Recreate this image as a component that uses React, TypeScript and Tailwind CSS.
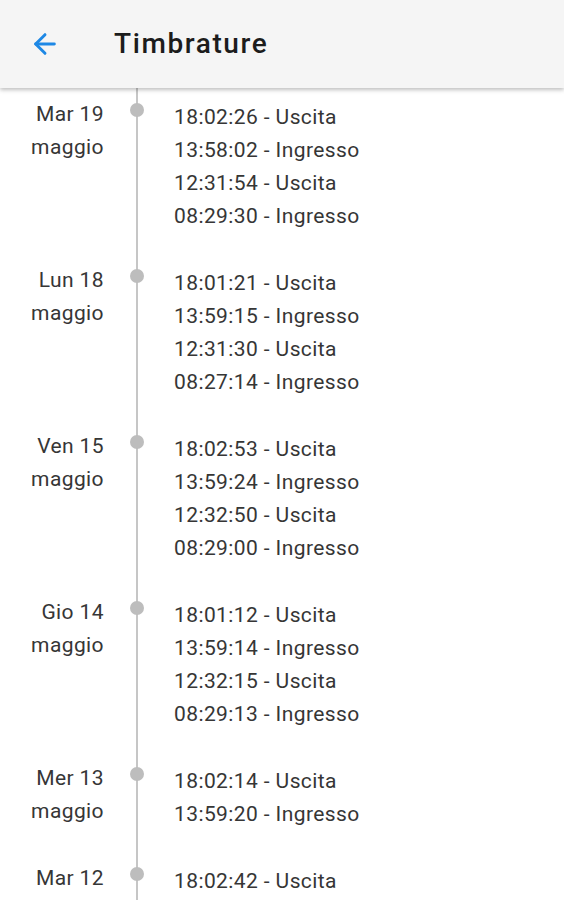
import { ArrowLeft } from "lucide-react";

type Day = { day: string; month: string; punches: [string, string][] };

const days: Day[] = [
  {
    day: "Mar 19",
    month: "maggio",
    punches: [
      ["18:02:26", "Uscita"],
      ["13:58:02", "Ingresso"],
      ["12:31:54", "Uscita"],
      ["08:29:30", "Ingresso"],
    ],
  },
  {
    day: "Lun 18",
    month: "maggio",
    punches: [
      ["18:01:21", "Uscita"],
      ["13:59:15", "Ingresso"],
      ["12:31:30", "Uscita"],
      ["08:27:14", "Ingresso"],
    ],
  },
  {
    day: "Ven 15",
    month: "maggio",
    punches: [
      ["18:02:53", "Uscita"],
      ["13:59:24", "Ingresso"],
      ["12:32:50", "Uscita"],
      ["08:29:00", "Ingresso"],
    ],
  },
  {
    day: "Gio 14",
    month: "maggio",
    punches: [
      ["18:01:12", "Uscita"],
      ["13:59:14", "Ingresso"],
      ["12:32:15", "Uscita"],
      ["08:29:13", "Ingresso"],
    ],
  },
  {
    day: "Mer 13",
    month: "maggio",
    punches: [
      ["18:02:14", "Uscita"],
      ["13:59:20", "Ingresso"],
    ],
  },
  {
    day: "Mar 12",
    month: "maggio",
    punches: [
      ["18:02:42", "Uscita"],
      ["13:59:01", "Ingresso"],
    ],
  },
];

export default function App() {
  return (
    <div className="w-[564px] h-[900px] overflow-hidden bg-white font-['Roboto',sans-serif]">
      <header className="relative z-10 h-[88px] bg-[#f5f5f5] flex items-center shadow-[0_2px_4px_rgba(0,0,0,0.25)]">
        <ArrowLeft className="ml-[29px] w-[32px] h-[32px] text-[#1e88e5]" strokeWidth={2.2} />
        <h1 className="ml-[53px] text-[28px] font-medium text-[#1c1c1c] tracking-[1.6px]">Timbrature</h1>
      </header>

      <main>
        {days.map((d) => (
          <div key={d.day} className="flex">
            <div className="w-[104px] shrink-0 pt-[10px] text-right text-[21px] leading-[33px] tracking-[0.4px] text-[#363636]">
              <div>{d.day}</div>
              <div>{d.month}</div>
            </div>
            <div className="relative w-[66px] shrink-0 flex justify-center">
              <div className="w-[2px] bg-[#c6c6c6]" />
              <span className="absolute top-[15px] left-[26px] w-[14px] h-[14px] rounded-full bg-[#bdbdbd]" />
            </div>
            <ul className="pl-[4px] pt-[13px] pb-[21px] text-[21px] leading-[33px] tracking-[0.4px] text-[#363636]">
              {d.punches.map(([time, kind]) => (
                <li key={time}>
                  {time} - {kind}
                </li>
              ))}
            </ul>
          </div>
        ))}
      </main>
    </div>
  );
}
